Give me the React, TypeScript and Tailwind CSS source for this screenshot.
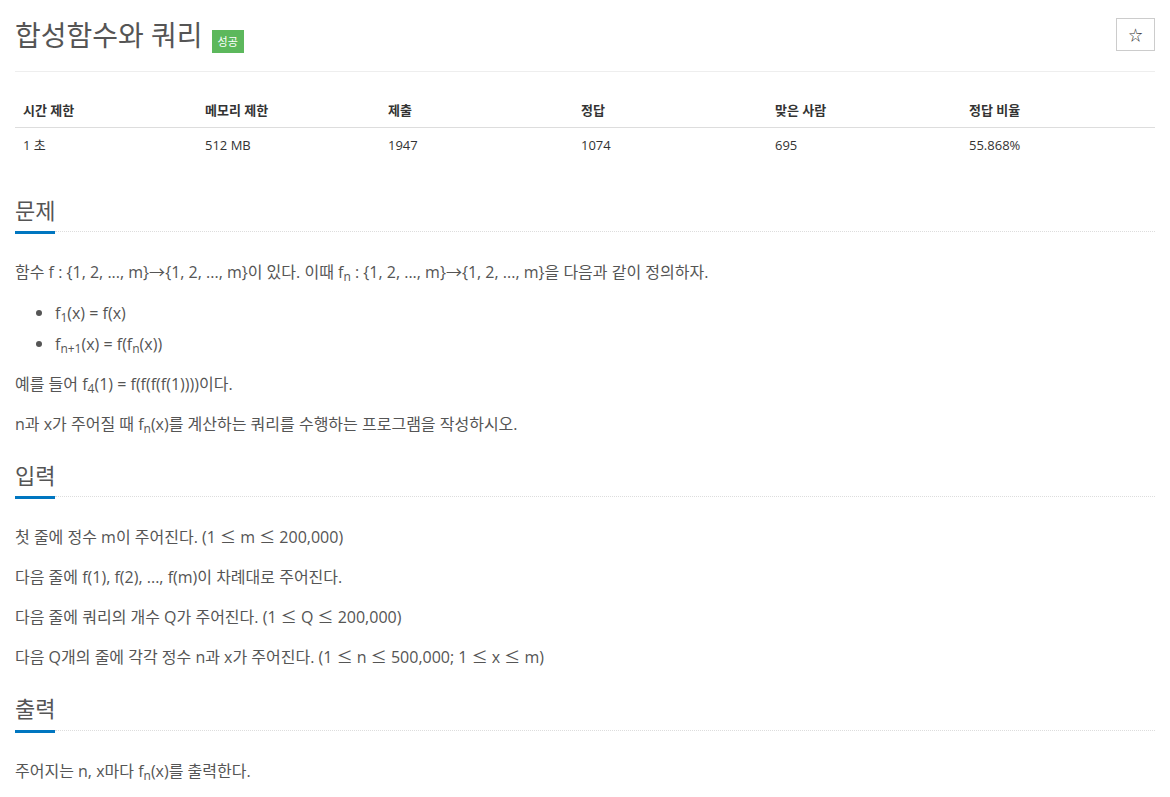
import React from 'react';

const font = { fontFamily: '"Open Sans", "Noto Sans CJK KR", sans-serif' };

const stats = [
  { label: '시간 제한', value: '1 초', w: 'w-[182px]' },
  { label: '메모리 제한', value: '512 MB', w: 'w-[183px]' },
  { label: '제출', value: '1947', w: 'w-[193px]' },
  { label: '정답', value: '1074', w: 'w-[194px]' },
  { label: '맞은 사람', value: '695', w: 'w-[194px]' },
  { label: '정답 비율', value: '55.868%', w: 'w-[194px]' },
];

function Headline({ title }: { title: string }) {
  return (
    <div className="flex items-end mb-[23px]">
      <h2 className="text-[22px] leading-[1.1] text-[#555] pb-[9px] border-b-[3px] border-[#0076c0]">
        {title}
      </h2>
      <div className="flex-1 h-[3px] border-t border-dotted border-[#ddd]" />
    </div>
  );
}

function F({ sub }: { sub: string }) {
  return (
    <>
      f<sub>{sub}</sub>
    </>
  );
}

function Le() {
  return (
    <span className="leading-none" style={{ fontFamily: '"Noto Sans CJK KR", sans-serif' }}>
      ≤
    </span>
  );
}

export default function App() {
  return (
    <div className="min-h-screen bg-white px-[15px]" style={font}>
      <div className="flex items-center justify-between pt-[18px] pb-[20px] border-b border-[#eee]">
        <h1 className="flex items-center h-[33px] text-[28px] leading-none text-[#555] font-normal">
          합성함수와 쿼리
          <span className="ml-[9px] mt-[14px] bg-[#5cb85c] text-white text-[11px] leading-none px-[6px] py-[6px]">
            성공
          </span>
        </h1>
        <button className="w-[39px] h-[33px] border border-[#ccc] bg-white flex items-center justify-center text-[14px] text-[#333]">
          ☆
        </button>
      </div>

      <table className="w-full table-fixed mt-[21px] text-[13px] text-[#333]">
        <colgroup>
          {stats.map((s) => (
            <col key={s.label} className={s.w} />
          ))}
        </colgroup>
        <thead>
          <tr className="border-b border-[#ddd]">
            {stats.map((s) => (
              <th key={s.label} className="text-left font-bold px-2 py-2 leading-[18px]">
                {s.label}
              </th>
            ))}
          </tr>
        </thead>
        <tbody>
          <tr>
            {stats.map((s) => (
              <td key={s.label} className="px-2 py-2 leading-[18px]">
                {s.value}
              </td>
            ))}
          </tr>
        </tbody>
      </table>

      <div className="text-base leading-[30px] text-[#555]">
        <section className="mt-[36px]">
          <Headline title="문제" />
          <p className="mb-[10px]">
            함수 f : {'{'}1, 2, ..., m{'}'}→{'{'}1, 2, ..., m{'}'}이 있다. 이때 <F sub="n" /> : {'{'}1, 2, ..., m{'}'}→{'{'}1, 2, ..., m{'}'}을 다음과 같이 정의하자.
          </p>
          <ul className="list-disc pl-10 mb-[10px] marker:text-[#555] marker:text-[18px]">
            <li>
              <F sub="1" />(x) = f(x)
            </li>
            <li>
              <F sub="n+1" />(x) = f(<F sub="n" />(x))
            </li>
          </ul>
          <p className="mb-[10px]">
            예를 들어 <F sub="4" />(1) = f(f(f(f(1))))이다.
          </p>
          <p className="mb-[10px]">
            n과 x가 주어질 때 <F sub="n" />(x)를 계산하는 쿼리를 수행하는 프로그램을 작성하시오.
          </p>
        </section>

        <section className="mt-6">
          <Headline title="입력" />
          <p className="mb-[10px]">첫 줄에 정수 m이 주어진다. (1 <Le /> m <Le /> 200,000)</p>
          <p className="mb-[10px]">다음 줄에 f(1), f(2), ..., f(m)이 차례대로 주어진다.</p>
          <p className="mb-[10px]">다음 줄에 쿼리의 개수 Q가 주어진다. (1 <Le /> Q <Le /> 200,000)</p>
          <p className="mb-[10px]">
            다음 Q개의 줄에 각각 정수 n과 x가 주어진다. (1 <Le /> n <Le /> 500,000; 1 <Le /> x <Le /> m)
          </p>
        </section>

        <section className="mt-6">
          <Headline title="출력" />
          <p className="mb-[10px]">
            주어지는 n, x마다 <F sub="n" />(x)를 출력한다.
          </p>
        </section>
      </div>
    </div>
  );
}
